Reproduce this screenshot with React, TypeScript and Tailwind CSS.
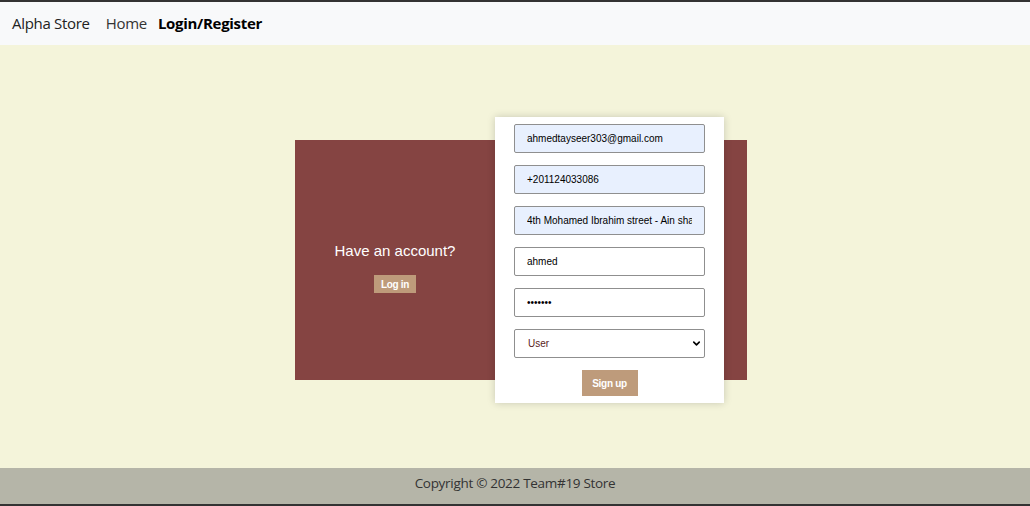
import { ChevronDown } from 'lucide-react';

const fieldBase =
    'h-[29px] w-[191px] rounded-[2px] border border-[#8f8f8f] px-[12px] text-[10px] text-black outline-none';

function Field({ value, filled, type = 'text' }: { value: string; filled?: boolean; type?: string }) {
    return (
        <input
            type={type}
            defaultValue={value}
            readOnly
            className={`${fieldBase} ${filled ? 'bg-[#e8f0fe]' : 'bg-white'}`}
            style={{ fontFamily: '"Liberation Sans", Arial, sans-serif' }}
        />
    );
}

export default function App() {
    return (
        <div
            className="flex h-[506px] w-full flex-col overflow-hidden border-y-2 border-[#333333] bg-[#f4f4da]"
            style={{ fontFamily: '"Liberation Sans", Arial, sans-serif' }}
        >
            {/* navbar */}
            <nav
                className="flex h-[43px] shrink-0 items-center gap-[16px] bg-[#f8f9fa] pl-[12px] text-[15px] tracking-[-0.3px]"
                style={{ fontFamily: '"Open Sans", "Noto Sans", sans-serif' }}
            >
                <span className="text-[#222]">Alpha Store</span>
                <div className="flex items-center gap-[11px]">
                    <span className="text-[#333]">Home</span>
                    <span className="font-bold text-black">Login/Register</span>
                </div>
            </nav>

            {/* main */}
            <main className="flex flex-1 items-center justify-center">
                <div className="relative mt-[7px] ml-[12px] flex h-[240px] w-[452px] bg-[#854442] text-white">
                    <div className="flex w-[200px] flex-col items-center justify-center gap-[13px] pt-[13px]">
                        <h2 className="text-[15px]">Have an account?</h2>
                        <button className="h-[18px] px-[7px] text-[10px] font-bold tracking-[-0.3px] bg-[#be9b7b]">Log in</button>
                    </div>
                    <div className="flex flex-1 flex-col items-center justify-center gap-[13px] pt-[13px] pl-[30px]">
                        <h2 className="text-[15px]">Don't have an account?</h2>
                        <button className="h-[18px] px-[7px] text-[10px] font-bold tracking-[-0.3px] bg-[#be9b7b]">Sign up</button>
                    </div>

                    {/* form card over the panel */}
                    <div className="absolute top-[-23px] left-[200px] z-10 flex h-[286px] w-[229px] flex-col items-center gap-[12px] bg-white pt-[7px] shadow-[0_0_8px_rgba(0,0,0,0.18)]">
                        <Field value="ahmedtayseer303@gmail.com" filled />
                        <Field value="+201124033086" filled />
                        <Field value="4th Mohamed Ibrahim street - Ain shams" filled />
                        <Field value="ahmed" />
                        <Field value="ahmedpa" type="password" />
                        <div className="relative h-[29px] w-[191px]">
                            <select
                                defaultValue="User"
                                className="h-full w-full appearance-none rounded-[2px] border border-[#8f8f8f] bg-white px-[13px] text-[10px] text-[#5a1c1c] outline-none"
                            >
                                <option>User</option>
                                <option>Admin</option>
                            </select>
                            <ChevronDown
                                size={11}
                                strokeWidth={3.5}
                                className="pointer-events-none absolute top-[9px] right-[3px] text-black"
                            />
                        </div>
                        <button className="h-[26px] w-[56px] bg-[#be9b7b] text-[10px] font-bold tracking-[-0.3px] text-white">
                            Sign up
                        </button>
                    </div>
                </div>
            </main>

            {/* footer */}
            <footer
                className="flex h-[36px] shrink-0 items-center justify-center bg-[#b5b5a8] pb-[5px] text-[13.5px] tracking-[-0.3px] text-[#333]"
                style={{ fontFamily: '"Open Sans", "Noto Sans", sans-serif' }}
            >
                Copyright © 2022 Team#19 Store
            </footer>
        </div>
    );
}
